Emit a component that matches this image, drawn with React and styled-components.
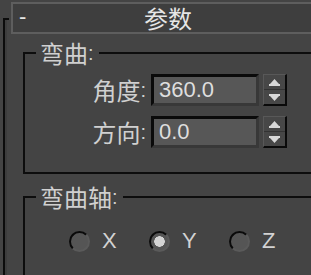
import React from 'react';
import styled, { createGlobalStyle } from 'styled-components';

const Global = createGlobalStyle`
  html, body { margin: 0; padding: 0; background: #444444; overflow: hidden; }
  body { font-family: "Liberation Sans", "Noto Sans CJK SC", sans-serif; }
`;

const Page = styled.div`
  width: 311px;
  height: 275px;
  padding-left: 3px;
  box-sizing: border-box;
  overflow: hidden;
`;

const Frame = styled.div`
  margin-top: 18px;
  border-top: 2px solid #0c0c0c;
  border-left: 2px solid #0c0c0c;
  box-shadow: inset 2px 0 0 #3d3d3d;
  width: 340px;
  height: 300px;
`;

const TitleBar = styled.div`
  margin: -18px 0 0 6px;
  width: 314px;
  height: 32px;
  box-sizing: border-box;
  border: 2px solid #5e5e5e;
  background: #3e3e3e;
  box-shadow: 0 0 0 2px #444444;
  display: flex;
  align-items: center;
  position: relative;
  color: #e6e6e6;
`;

const Collapse = styled.span`
  font-size: 22px;
  line-height: 1;
  padding-left: 6px;
  width: 20px;
  margin-top: -3px;
`;

const TitleText = styled.span`
  flex: 1;
  text-align: center;
  font-family: "Noto Sans CJK SC", sans-serif;
  font-size: 24px;
  line-height: 28px;
  margin-right: 26px;
`;

const Group = styled.fieldset`
  margin: ${p => p.$top}px 0 0 18px;
  width: 320px;
  border: 2px solid #0d0d0d;
  padding: ${p => p.$padTop}px 0 ${p => p.$padBottom}px 0;
  box-sizing: border-box;
  min-inline-size: 0;
`;

const Legend = styled.legend`
  margin-left: 11px;
  padding: 0 5px 0 4px;
  height: 26px;
  display: flex;
  align-items: center;
  font-family: "Noto Sans CJK SC", sans-serif;
  font-size: 24px;
  line-height: 26px;
  color: #d0d0d0;
`;

const Colon = styled.span`
  font-family: "Liberation Sans", sans-serif;
  font-size: 20px;
  line-height: 20px;
`;

const Rows = styled.div`
  display: flex;
  flex-direction: column;
  gap: 10px;
`;

const Row = styled.div`
  display: flex;
  align-items: center;
  height: 32px;
`;

const Label = styled.span`
  width: 121px;
  height: 32px;
  margin-right: 5px;
  display: flex;
  align-items: center;
  justify-content: flex-end;
  font-family: "Noto Sans CJK SC", sans-serif;
  font-size: 24px;
  line-height: 32px;
  color: #d0d0d0;
  white-space: nowrap;
`;

const NumberField = styled.input`
  width: 108px;
  height: 32px;
  box-sizing: border-box;
  margin: 0 4px 0 0;
  border-style: solid;
  border-width: 3px;
  border-color: #0a0a0a #383838 #383838 #0a0a0a;
  background: #575757;
  color: #dedede;
  font-family: "Liberation Sans", sans-serif;
  font-size: 22px;
  padding: 0 0 0 5px;
  outline: none;
`;

const Spinner = styled.div`
  width: 24px;
  height: 32px;
  box-sizing: border-box;
  border-style: solid;
  border-width: 1px 2px 2px 1px;
  border-color: #585858 #0a0a0a #0a0a0a #585858;
  background: #474747;
  display: flex;
  flex-direction: column;
`;

const SpinHalf = styled.div`
  flex: 1;
  display: flex;
  align-items: center;
  justify-content: center;
  border-top: ${p => (p.$bottom ? '1px solid #333333' : 'none')};
`;

const Arrow = ({ down }) => (
  <svg width="11" height="7" viewBox="0 0 11 7">
    {down ? (
      <>
        <rect x="0" y="0" width="11" height="2" fill="#d8d8d8" />
        <polygon points="1,2 10,2 5.5,7" fill="#d8d8d8" />
      </>
    ) : (
      <>
        <polygon points="5.5,0 10,5 1,5" fill="#d8d8d8" />
        <rect x="0" y="5" width="11" height="2" fill="#d8d8d8" />
      </>
    )}
  </svg>
);

const RadioRow = styled.div`
  display: flex;
  padding-left: 44px;
  height: 22px;
  align-items: center;
`;

const RadioOption = styled.label`
  width: 80px;
  height: 22px;
  display: flex;
  align-items: center;
  gap: 12px;
  font-family: "Liberation Sans", sans-serif;
  font-size: 22px;
  line-height: 22px;
  color: #d2d2d2;
`;

const RadioCircle = styled.span`
  width: 21px;
  height: 21px;
  box-sizing: border-box;
  border-radius: 50%;
  border-style: solid;
  border-width: 2px;
  border-color: #0a0a0a #5a5a5a #5a5a5a #0a0a0a;
  background: ${p =>
    p.$checked
      ? 'radial-gradient(circle, #d4d4d4 0 5px, #555555 5.5px)'
      : '#555555'};
`;

const Spin = ({ value }) => (
  <>
    <NumberField defaultValue={value} readOnly />
    <Spinner>
      <SpinHalf><Arrow /></SpinHalf>
      <SpinHalf $bottom><Arrow down /></SpinHalf>
    </Spinner>
  </>
);

export default function App() {
  return (
    <>
      <Global />
      <Page>
        <Frame>
          <TitleBar>
            <Collapse>-</Collapse>
            <TitleText>参数</TitleText>
          </TitleBar>
          <Group $top={6} $padTop={8} $padBottom={24}>
            <Legend>弯曲<Colon>:</Colon></Legend>
            <Rows>
              <Row>
                <Label>角度<Colon>:</Colon></Label>
                <Spin value="360.0" />
              </Row>
              <Row>
                <Label>方向<Colon>:</Colon></Label>
                <Spin value="0.0" />
              </Row>
            </Rows>
          </Group>
          <Group $top={10} $padTop={20} $padBottom={40}>
            <Legend>弯曲轴<Colon>:</Colon></Legend>
            <RadioRow>
              <RadioOption><RadioCircle />X</RadioOption>
              <RadioOption><RadioCircle $checked />Y</RadioOption>
              <RadioOption><RadioCircle />Z</RadioOption>
            </RadioRow>
          </Group>
        </Frame>
      </Page>
    </>
  );
}
